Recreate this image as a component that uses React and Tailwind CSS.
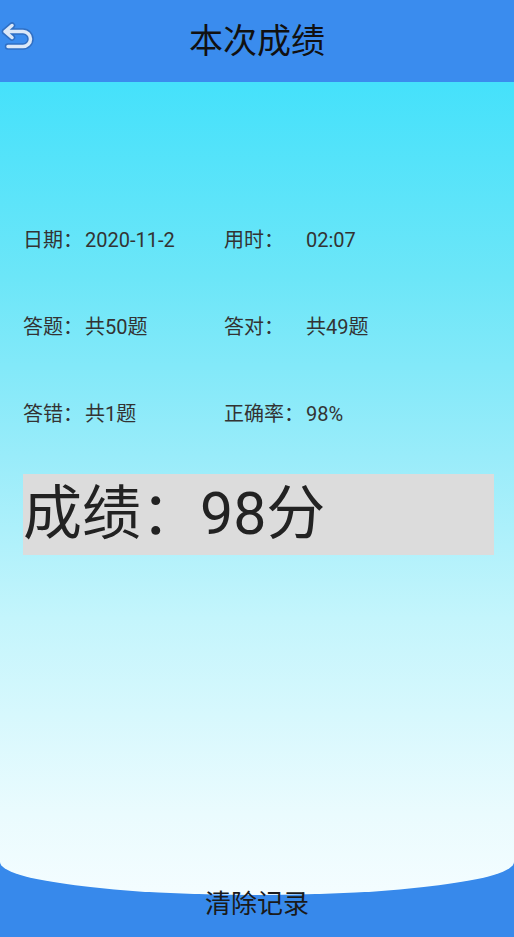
import React from "react";

const font = { fontFamily: "Roboto, 'Noto Sans CJK SC', 'Noto Sans', sans-serif" };

const backPath = "M12 3.5 L5 9.5 L12 15.5 M5 9.5 H23 a7.5 7.5 0 0 1 0 15 H8";

function BackIcon() {
  return (
    <svg width="36" height="30" viewBox="0 0 36 30" fill="none">
      <path d={backPath} stroke="#2f6fc4" strokeWidth="6.5" strokeLinecap="round" strokeLinejoin="round" />
      <path d={backPath} stroke="#dbe8f8" strokeWidth="3.5" strokeLinecap="round" strokeLinejoin="round" />
    </svg>
  );
}

function Row({ l1, v1, l2, v2 }) {
  return (
    <div className="flex items-center h-[26px] text-[20px] text-[#333] leading-[26px]">
      <div className="w-[201px] flex">
        <span className="w-[62px]">{l1}</span>
        <span>{v1}</span>
      </div>
      <div className="flex">
        <span className="w-[82px]">{l2}</span>
        <span>{v2}</span>
      </div>
    </div>
  );
}

export default function App() {
  return (
    <div className="h-[937px] w-[514px] flex flex-col bg-[#3789eb] overflow-hidden" style={font}>
      <header className="h-[82px] shrink-0 bg-[#3a8cee] relative flex items-center justify-center">
        <div className="absolute left-[0px] top-[22px]">
          <BackIcon />
        </div>
        <h1 className="text-[34px] text-[#111] leading-none">本次成绩</h1>
      </header>
      <main
        className="flex-1 flex flex-col px-[23px] pt-[145px] rounded-b-[50%_33px]"
        style={{
          background:
            "linear-gradient(to bottom, #45e1fb 0%, #6ce6f8 24%, #99ecfa 46%, #c4f5fc 66%, #eafbfe 90%, #f4fdff 100%)",
        }}
      >
        <div className="flex flex-col gap-[61px]">
          <Row l1="日期：" v1="2020-11-2" l2="用时：" v2="02:07" />
          <Row l1="答题：" v1="共50题" l2="答对：" v2="共49题" />
          <Row l1="答错：" v1="共1题" l2="正确率：" v2="98%" />
        </div>
        <div className="mt-[47px] h-[81px] w-[471px] bg-[#dcdcdc] flex items-center">
          <span className="text-[59px] text-[#222] leading-none -mt-[2px]">成绩：98分</span>
        </div>
      </main>
      <footer className="h-[42px] shrink-0 flex justify-center">
        <span className="text-[26px] leading-[26px] text-[#1a1a1a] -mt-[4px]">清除记录</span>
      </footer>
    </div>
  );
}
